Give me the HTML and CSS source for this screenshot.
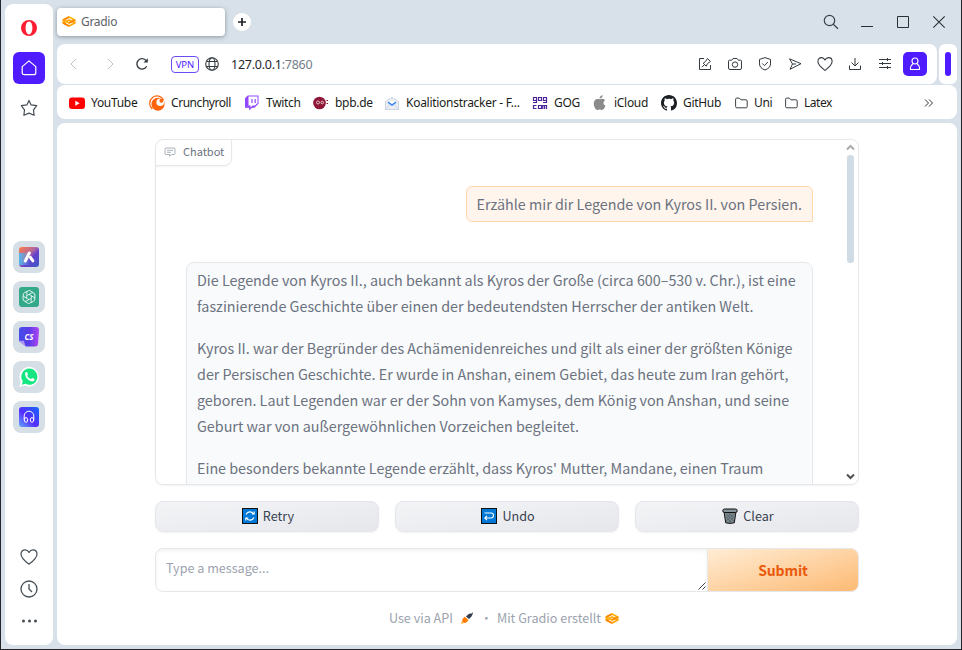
FILE: index.html
```html
<!DOCTYPE html>
<html lang="de">
<head>
<meta charset="utf-8">
<title>Gradio</title>
<link rel="stylesheet" href="styles.css">
</head>
<body>
<svg width="0" height="0" class="defs">
  <symbol id="gradio" viewBox="0 0 14 13">
    <path d="M1.200 5 7 2l5.800 3L7 8Z" fill="none" stroke="#ffb300" stroke-width="1.700" stroke-linejoin="round"/>
    <path d="M1.200 8 7 5l5.800 3L7 11Z" fill="none" stroke="#ffa400" stroke-width="1.700" stroke-linejoin="round"/>
    <path d="M1.200 5 7 2M12.800 5 7 8M1.200 8 7 11" fill="none" stroke="#ff8400" stroke-width="1.700" stroke-linejoin="round"/>
    <path d="M1 5v3M13 5v3" stroke="#ff9d00" stroke-width="1"/>
  </symbol>
  <symbol id="heart" viewBox="0 0 18 18">
    <path d="M9 16.200C6.500 14.300 1 10.200 1 6.200 1 3.500 2.800 1.800 5 1.800c1.800 0 3.200 1 4 2.600.8-1.600 2.200-2.600 4-2.600 2.200 0 4 1.700 4 4.400 0 4-5.500 8.100-8 10Z" fill="none" stroke="currentColor" stroke-width="1.200" stroke-linejoin="round"/>
  </symbol>
  <symbol id="folder" viewBox="0 0 13 12">
    <path d="M.6 2.200q0-1.100 1.100-1.100h2.600l1.600 1.700h5q1.300 0 1.300 1.200v5.500q0 1.300-1.300 1.300h-9Q.6 10.800.6 9.500Z" fill="none" stroke="#3a4046" stroke-width="1"/>
  </symbol>
</svg>
<div class="window">
  <aside class="sidebar">
    <svg class="opera" width="16" height="18" viewBox="0 0 16 18"><path fill="#fa1e32" fill-rule="evenodd" d="M8 1a8 8 0 1 0 0 16A8 8 0 0 0 8 1Zm0 1.600c2 0 3.400 2.800 3.400 6.400S10 15.400 8 15.400 4.600 12.600 4.600 9 6 2.600 8 2.600Z"/></svg>
    <div class="home"><svg width="16" height="16" viewBox="0 0 16 16"><path d="M1.200 6.600 8 .9l6.800 5.700v6.100q0 2-2 2H3.200q-2 0-2-2Z" fill="none" stroke="#fff" stroke-width="1.200" stroke-linejoin="round"/></svg></div>
    <svg class="star" width="18" height="18" viewBox="0 0 18 18"><path d="M9 1.400 11.100 5.900 16.700 6.700 13.500 10.800 14.100 16.300 9 14.100 3.900 16.300 4.500 10.800 1.300 6.700 6.900 5.900Z" fill="none" stroke="#454d55" stroke-width="1.200" stroke-linejoin="round"/></svg>
    <div class="apps">
      <div class="app"><svg width="20" height="20"><defs><linearGradient id="a1" x2="1" y2="1"><stop stop-color="#ff7a45"/><stop offset=".42" stop-color="#b5689a"/><stop offset=".6" stop-color="#6340cc"/><stop offset="1" stop-color="#3d5bc4"/></linearGradient><linearGradient id="a1b" x1="0" x2="1"><stop stop-color="#50b5f0"/><stop offset=".6" stop-color="#50b5f0" stop-opacity="0"/></linearGradient></defs><rect width="20" height="20" rx="3" fill="url(#a1)"/><rect y="6" width="20" height="12" fill="url(#a1b)"/><path d="m6.300 14 4-8" stroke="#fff" stroke-width="3" stroke-linecap="round"/><path d="m11.400 10.300 2.500 3.500" stroke="#fff" stroke-width="3" stroke-linecap="round"/></svg></div>
      <div class="app"><svg width="20" height="20"><rect width="20" height="20" rx="3" fill="#34a98a"/><g fill="none" stroke="#fff" stroke-width=".8" transform="translate(10 10)"><path d="M-2.200-1.300V-4.200a2.300 2.300 0 0 1 3.500-1.900L4-4.500"/><path d="M-2.200-1.300V-4.200a2.300 2.300 0 0 1 3.500-1.900L4-4.500" transform="rotate(60)"/><path d="M-2.200-1.300V-4.200a2.300 2.300 0 0 1 3.500-1.900L4-4.500" transform="rotate(120)"/><path d="M-2.200-1.300V-4.200a2.300 2.300 0 0 1 3.500-1.900L4-4.500" transform="rotate(180)"/><path d="M-2.200-1.300V-4.200a2.300 2.300 0 0 1 3.500-1.900L4-4.500" transform="rotate(240)"/><path d="M-2.200-1.300V-4.200a2.300 2.300 0 0 1 3.500-1.900L4-4.500" transform="rotate(300)"/><path d="M0-2.600 2.300-1.300V1.300L0 2.600-2.300 1.300V-1.300Z"/></g></svg></div>
      <div class="app"><svg width="20" height="20"><defs><linearGradient id="a3" x2="1"><stop stop-color="#444de8"/><stop offset=".5" stop-color="#5b3de8"/><stop offset="1" stop-color="#ad45f2"/></linearGradient></defs><path d="M3 0h14q3 0 3 3l-1 14q-.3 2.500-3 2.500H7L0 14V3Q0 0 3 0Z" fill="url(#a3)"/><path d="m0 13.500 5 .5 1.500 5.500Z" fill="#b596f5"/><text x="10" y="13" class="cs">CS</text></svg></div>
      <div class="app"><svg width="20" height="20"><path d="M10.300 0A9.700 9.700 0 1 1 6 18.500L.2 20l1.500-5.500A9.700 9.700 0 0 1 10.300 0Z" fill="#fff"/><path d="M10.300 1.600a8.100 8.100 0 1 1-3.900 15.200l-3.600 1 1-3.500A8.100 8.100 0 0 1 10.300 1.600Z" fill="#16e681"/><path d="M6.300 5.600c.6-.9 1.600-.8 1.900 0l.7 1.600c.2.600-.8 1.300-.6 1.800.8 1.500 2 2.500 3.500 3 .5.100 1.100-1.200 1.700-1l1.700.8c.8.500.4 1.700-.4 2.200-3.500 2-9.900-3.700-8.500-8.400Z" fill="#fff"/></svg></div>
      <div class="app"><svg width="20" height="20"><defs><linearGradient id="a5" x1="0" x2="1" y1="1" y2="0"><stop stop-color="#62a9ff"/><stop offset=".45" stop-color="#552cff"/><stop offset="1" stop-color="#1567ff"/></linearGradient></defs><rect width="20" height="20" rx="3" fill="url(#a5)"/><path d="M5.200 13V9a4.800 4.800 0 0 1 9.600 0v4" fill="none" stroke="#fff"/><ellipse cx="7" cy="12.900" rx="1.700" ry="2.400" fill="none" stroke="#fff"/><ellipse cx="13" cy="12.900" rx="1.700" ry="2.400" fill="none" stroke="#fff"/></svg></div>
    </div>
    <div class="tools">
      <svg width="18" height="18"><use href="#heart"/></svg>
      <svg width="18" height="18" viewBox="0 0 18 18" fill="none" stroke="currentColor" stroke-width="1.300"><circle cx="9" cy="9" r="8"/><path d="M9 4v5l3 3"/></svg>
      <svg width="18" height="18" viewBox="0 0 18 18" fill="currentColor"><circle cx="3.500" cy="9" r="1.500"/><circle cx="9.500" cy="9" r="1.500"/><circle cx="15.500" cy="9" r="1.500"/></svg>
    </div>
  </aside>
  <div class="main">
    <header class="titlebar">
      <div class="tab"><svg width="14" height="13"><use href="#gradio"/></svg><span>Gradio</span></div>
      <div class="newtab"><svg width="8" height="8"><path d="M4 0v8M0 4h8" stroke="#1f2429" stroke-width="1.700"/></svg></div>
      <div class="controls">
        <svg width="16" height="16" fill="none" stroke="#3b4147" stroke-width="1.200"><circle cx="6.500" cy="6.500" r="5.200"/><path d="m10.300 10.300 4.700 4.500"/></svg>
        <svg width="16" height="16"><path d="M2 12.500h12" stroke="#2b3035"/></svg>
        <svg width="16" height="16"><path d="M2.500 2.500h11v11h-11z" stroke="#2b3035" fill="none"/></svg>
        <svg width="16" height="16"><path d="m2.300 2.300 11.400 11.400m0-11.400L2.300 13.700" stroke="#2b3035" stroke-width="1.100"/></svg>
      </div>
    </header>
    <div class="toolrow">
      <div class="toolbar">
        <div class="nav">
          <svg width="16" height="16"><path d="m10 3-5 5 5 5" fill="none" stroke="#bcc1c6"/></svg>
          <svg class="fwd" width="16" height="16"><path d="m6 3 5 5-5 5" fill="none" stroke="#bcc1c6"/></svg>
          <svg width="16" height="16"><path d="M12.700 10.300a5.200 5.200 0 1 1-.5-5.600" fill="none" stroke="#333a40" stroke-width="1.300"/><path d="M13.800 2.300v4.300H9.500z" fill="#333a40"/></svg>
        </div>
        <span class="vpn">VPN</span>
        <svg class="globe" width="14" height="14" fill="none" stroke="#333a40" stroke-width="1.100"><circle cx="7" cy="7" r="6.300"/><ellipse cx="7" cy="7" rx="3" ry="6.300"/><path d="M1.500 4.500h11M1.500 9.500h11"/></svg>
        <span class="url">127.0.0.1<i>:7860</i></span>
        <div class="actions">
          <svg width="16" height="16" viewBox="0 0 16 16"><path d="M7 2.500H2.500v11h11V9"/><path d="M5 11.300 7 9M6.200 7.200l3 3 1.200-2.500 3-2.300-2.900-2.900-2.200 3.200Z"/></svg>
          <svg width="16" height="16" viewBox="0 0 16 16"><path d="M1.500 5.200q0-1 1-1h2.200L6 2.500h4l1.300 1.700h2.200q1 0 1 1v6.800q0 1.500-1.500 1.500H3Q1.500 13.500 1.500 12Z"/><circle cx="8" cy="8.600" r="2.700"/></svg>
          <svg width="16" height="16" viewBox="0 0 16 16"><path d="M8 1.600 13.500 3.400v4.500c0 3-2.200 4.900-5.500 6.100-3.300-1.200-5.500-3.100-5.500-6.100V3.400ZM5.200 7.400l2.200 2.200 3.500-3.600"/></svg>
          <svg width="16" height="16" viewBox="0 0 16 16"><path d="M2.500 2.800 14 7.700 3 13.300l2.500-5.300ZM5.500 8h3.500"/></svg>
          <svg width="16" height="16"><use href="#heart"/></svg>
          <svg width="16" height="16" viewBox="0 0 16 16"><path d="M8 2v7.500M4.500 6.500 8 10l3.500-3.500M2.500 9.500v4h11v-4"/></svg>
          <svg width="16" height="16" viewBox="0 0 16 16"><path d="M2 3.500h12M2 7.500h12M2 11.500h12M10.500 2v3M5.500 6v3M10.500 10v3"/></svg>
        </div>
        <div class="avatar"><svg width="14" height="14" fill="none" stroke="#fff" stroke-width="1.100"><circle cx="7" cy="4" r="3"/><path d="M4.800 6.800C3 8.300 2.200 10 2.500 12.500h9C11.800 10 11 8.300 9.200 6.800"/></svg></div>
      </div>
      <div class="panel"><span></span></div>
    </div>
    <nav class="bookmarks">
      <a><svg width="16" height="16"><rect y="2.500" width="16" height="11.500" rx="3" fill="#f00"/><path d="M6.300 5.800v5l4.400-2.500z" fill="#fff"/></svg><span>YouTube</span></a>
      <a><svg width="16" height="16"><path d="M14.700 5A7.400 7.400 0 1 0 3.300 14" fill="none" stroke="#ff640a" stroke-width="1.200"/><circle cx="9" cy="9.200" r="6.500" fill="#ff640a"/><circle cx="11.200" cy="7.300" r="3.800" fill="#fff"/><circle cx="12.400" cy="5.700" r="2" fill="#ff640a"/></svg><span class="tight">Crunchyroll</span></a>
      <a><svg width="16" height="16"><path d="M3.800.5h10.700v8.300l-4 4H8L5.200 15.500v-2.700H1V3.200z" fill="#9146ff"/><path d="M4.500 1.500h9V8l-2.500 2.500H8.500L6.500 12.500v-2h-2z" fill="#fff"/><path d="M8 4v4M11.200 4v4" stroke="#9146ff" stroke-width="1.200"/></svg><span>Twitch</span></a>
      <a><svg width="16" height="16"><circle cx="6.500" cy="8" r="6.300" fill="#901637"/><circle cx="5" cy="7.500" r="1.500" stroke="#fff" stroke-width=".7" fill="none"/><circle cx="9.300" cy="7.500" r="1.300" stroke="#fff" stroke-width=".7" fill="none"/><path d="M13.500 5.500H15M13.500 8.500H15" stroke="#901637" stroke-width="1.200"/></svg><span>bpb.de</span></a>
      <a><svg width="16" height="16"><path d="M1.500 6.500 8 2.500l6.500 4v8h-13z" fill="#e9eff4" stroke="#cbd5df"/><path d="M3.500 6.500h9L8 11z" fill="#fff"/><path d="m4 7.200 4 2.800 4-2.800" fill="none" stroke="#3c82f6" stroke-width="1.500"/><path d="m1.500 14 4.500-4m8.500 4L10 10" stroke="#cbd5df"/></svg><span class="snug">Koalitionstracker - F...</span></a>
      <a><svg width="16" height="16" fill="none" stroke="#4a249b" stroke-width="1.200"><path d="M4.500 5.500h-3v-3h3v5h-3.500M6.500 2.500h3v3h-3zM14.500 5.500h-3v-3h3v5h-3.500M4.500 10.500h-3v3h3M6.500 10.500h3v3h-3zM10.800 14v-3.500h3.700V14M12.600 10.500V14"/></svg><span>GOG</span></a>
      <a><svg width="16" height="16" fill="#8b8b8b"><path d="M8 4.300c1.300-.7 3.800-1 5 1-2.300 1.600-1.800 4.500.5 5.500C12.800 13 11.300 15 10 15c-1 0-1.300-.6-2.300-.6S6.200 15 5.300 15C3.300 15 .3 8.900 2.600 5.700 4.200 3.500 6.300 4 8 4.300Z"/><path d="M7.500 3.500C7.500 1.800 9 .4 10.700.3c.1 1.900-1.400 3.200-3.200 3.200Z"/></svg><span>iCloud</span></a>
      <a><svg width="16" height="16" viewBox="0 0 16 16"><path fill="#1b1f23" d="M8 0C3.580 0 0 3.580 0 8c0 3.540 2.290 6.530 5.470 7.590.4.070.55-.17.55-.38 0-.19-.01-.82-.01-1.490-2.010.37-2.530-.49-2.690-.94-.09-.23-.48-.94-.82-1.130-.28-.15-.68-.52-.01-.53.63-.01 1.080.58 1.230.82.72 1.210 1.870.87 2.330.66.07-.52.28-.87.51-1.070-1.780-.2-3.640-.89-3.640-3.950 0-.87.31-1.590.82-2.150-.08-.2-.36-1.020.08-2.120 0 0 .67-.21 2.200.82.64-.18 1.320-.27 2-.27s1.360.09 2 .27c1.530-1.040 2.200-.82 2.200-.82.44 1.100.16 1.920.08 2.120.51.56.82 1.270.82 2.150 0 3.070-1.870 3.750-3.650 3.950.29.25.54.73.54 1.480 0 1.070-.01 1.930-.01 2.200 0 .21.15.46.55.38A8.010 8.010 0 0 0 16 8c0-4.420-3.580-8-8-8Z"/></svg><span>GitHub</span></a>
      <a><svg width="13" height="12"><use href="#folder"/></svg><span>Uni</span></a>
      <a><svg width="13" height="12"><use href="#folder"/></svg><span class="tight">Latex</span></a>
      <svg class="more" width="10" height="8" fill="none" stroke="#2f353a"><path d="m1 .5 3.500 3.500L1 7.500M5 .5 8.500 4 5 7.500"/></svg>
    </nav>
    <main class="page">
      <section class="chat">
        <div class="label"><svg width="12" height="10" fill="none" stroke="#a3a9b3" stroke-width=".9"><path d="M2 1h8q1 0 1 1v4.500q0 1-1 1H7.500L5.500 9.300V7.500H2q-1 0-1-1V2q0-1 1-1ZM3 3.300h6M3 5.300h4"/></svg><span>Chatbot</span></div>
        <div class="log">
          <div class="msg user">Erzähle mir dir Legende von Kyros II. von Persien.</div>
          <div class="msg bot">
            <p>Die Legende von Kyros II., auch bekannt als Kyros der Große (circa 600–530 v. Chr.), ist eine<br>faszinierende Geschichte über einen der bedeutendsten Herrscher der antiken Welt.</p>
            <p>Kyros II. war der Begründer des Achämenidenreiches und gilt als einer der größten Könige<br>der Persischen Geschichte. Er wurde in Anshan, einem Gebiet, das heute zum Iran gehört,<br>geboren. Laut Legenden war er der Sohn von Kamyses, dem König von Anshan, und seine<br>Geburt war von außergewöhnlichen Vorzeichen begleitet.</p>
            <p>Eine besonders bekannte Legende erzählt, dass Kyros' Mutter, Mandane, einen Traum</p>
          </div>
        </div>
        <div class="scroll">
          <svg width="9" height="7"><path d="M1 5.500 4.500 2 8 5.500" fill="none" stroke="#aaa" stroke-width="2"/></svg>
          <span class="thumb"></span>
          <svg class="down" width="9" height="7"><path d="M1 1.500 4.500 5 8 1.500" fill="none" stroke="#505050" stroke-width="2"/></svg>
        </div>
      </section>
      <div class="buttons">
        <button><svg width="16" height="16"><rect x=".5" y=".5" width="15" height="15" fill="#0078d7" stroke="#111"/><path d="M4 6.500a4.300 4.300 0 0 1 7.500-.8M12 9.500a4.300 4.300 0 0 1-7.500.8M12.200 3.500V6H9.700M3.800 12.500V10h2.500" fill="none" stroke="#fff" stroke-width="1.100"/></svg>Retry</button>
        <button><svg width="16" height="16"><rect x=".5" y=".5" width="15" height="15" fill="#0078d7" stroke="#111"/><path d="M3.500 5h6.500q2.500 0 2.500 2.500T10 10H4M6 7.800 3.800 10 6 12.200" fill="none" stroke="#fff" stroke-width="1.100"/></svg>Undo</button>
        <button><svg width="16" height="16"><path d="M2 3.500h12l-1.700 11.300q-4.300 1.200-8.600 0Z" fill="#7b888e" stroke="#111"/><path d="m4 6 8 7M4.500 9.500 9 14M7 5.500l5 4.500M12 6l-8 7M9 5.500 4.500 10M11.500 9.500 7 14" stroke="#4a565c" stroke-width=".6"/><rect x=".8" y="1" width="14.400" height="3.500" rx="1.700" fill="#87949a" stroke="#111"/></svg>Clear</button>
      </div>
      <div class="compose">
        <div class="input">Type a message...<svg class="grip" width="8" height="8"><path d="M.5 7.500l7-7M4.500 7.500l3-3" stroke="#333" stroke-width=".9"/></svg></div>
        <button class="submit">Submit</button>
      </div>
      <footer><span>Use via API</span><svg class="rocket" width="12" height="12"><path d="M5 4.500 8 1.800 10.500 1.500 12 0 11.500 2.500 10.500 4.500 8 7Z" fill="#333c4d"/><path d="m1.500 7 2.500-2.500 3.500 3.500-2 2.500L3 11l-2-1.500Z" fill="#ff7c00"/><path d="m0 12 1-3 2 2Z" fill="#ffab35"/><path d="m4 4.500 4.500 4" stroke="#fff" stroke-width=".7"/></svg><span class="dot">·</span><span>Mit Gradio erstellt</span><svg width="14" height="13"><use href="#gradio"/></svg></footer>
    </main>
  </div>
</div>
</body>
</html>
```
FILE: styles.css
```css
* { box-sizing: border-box; }
body { margin: 0; font-family: "Noto Sans", "Open Sans", sans-serif; }
svg { display: block; flex: none; }
.defs { position: absolute; }
button { font: inherit; }

.window {
  display: flex; gap: 4px; width: 962px; height: 650px; overflow: hidden;
  padding: 4px 4px 4px; background: #d8e1e9;
  border: solid #22252b; border-width: 0 1px 1px;
}
.sidebar {
  width: 48px; height: 641px; background: #fff; border-radius: 8px;
  display: flex; flex-direction: column; align-items: center; color: #454d55;
  padding-top: 15px;
}
.home {
  width: 32px; height: 32px; margin-top: 15px; border-radius: 6px; background: #4e1cff;
  display: grid; place-items: center;
}
.star { margin-top: 15px; }
.apps { display: flex; flex-direction: column; gap: 8px; margin-top: 124px; }
.app {
  width: 32px; height: 32px; border-radius: 8px; background: #d5dfe5;
  display: grid; place-items: center;
}
.cs { font: italic 700 8px "Open Sans", sans-serif; fill: #fff; text-anchor: middle; }
.tools { display: flex; flex-direction: column; gap: 14px; margin: auto 0 15px; }

.main { flex: 1; display: flex; flex-direction: column; min-width: 0; }
.titlebar { height: 40px; display: flex; align-items: flex-start; padding-top: 4px; }
.tab {
  width: 168px; height: 28px; background: #fff; border-radius: 4px;
  box-shadow: 0 1px 4px rgba(60, 75, 90, .5);
  display: flex; align-items: center; gap: 5px; padding: 0 0 1px 5px;
  font-size: 12px; letter-spacing: -.3px; color: #5d6166;
}
.newtab {
  width: 18px; height: 18px; margin: 5px 0 0 8px; border-radius: 50%; background: #fff;
  display: grid; place-items: center;
}
.controls { display: flex; gap: 20px; margin: 6px 10px 0 auto; }
.toolrow { display: flex; gap: 2px; height: 40px; }
.toolbar {
  flex: 1; background: #fff; border-radius: 8px; display: flex; align-items: center;
  padding: 0 10px 0 9px;
}
.nav { display: flex; gap: 18px; }
.fwd { margin: 0 -2px 0 2px; }
.vpn {
  width: 28px; height: 17px; margin-left: 21px; border: 1px solid #6b4cf5; border-radius: 4px;
  font-size: 9.500px; line-height: 15px; text-align: center; color: #4e1cff;
}
.globe { margin-left: 6px; }
.url { margin-left: 12px; font-size: 12.500px; letter-spacing: -.25px; color: #24292e; white-space: nowrap; }
.url i { font-style: normal; color: #74808c; }
.actions { display: flex; gap: 14px; margin-left: auto; color: #333a40; }
.actions svg { fill: none; stroke: #333a40; stroke-width: 1; }
.avatar {
  width: 24px; height: 24px; margin-left: 10px; border-radius: 5px; background: #4e1cff;
  display: grid; place-items: center;
}
.panel { width: 18px; border-radius: 6px; background: #fff; display: grid; place-items: center; }
.panel span { width: 6px; height: 24px; border-radius: 3px; background: #4e1cff; }
.bookmarks {
  height: 34px; margin-top: 1px; background: #fff; border-radius: 8px; padding: 1px 23px 0 12px;
  display: grid; align-items: center;
  grid-template-columns: 80px 95px 69px 71px 148px 60px 69px 74px 50px 1fr 10px;
  font-size: 12px; letter-spacing: -.3px; color: #1a1d20;
}
.bookmarks a { display: flex; align-items: center; gap: 6px; white-space: nowrap; }
.bookmarks .tight { letter-spacing: -.45px; }
.bookmarks .snug { letter-spacing: -.28px; }

.page {
  flex: 1; margin-top: 4px; background: #fff; border-radius: 8px;
  padding: 16px 98px 0; font-family: "Noto Sans CJK SC", sans-serif;
}
.chat {
  position: relative; height: 346px; border: 1px solid #e5e7eb; border-radius: 8px;
  overflow: hidden; box-shadow: 0 1px 2px rgba(0, 0, 0, .05);
}
.label {
  position: absolute; left: -1px; top: -1px; width: 77px; height: 27px;
  display: flex; align-items: center; gap: 7px; padding: 0 0 1px 8px;
  border: 1px solid #e5e7eb; border-radius: 8px 0 8px 0; box-shadow: 0 1px 2px rgba(0, 0, 0, .05);
  font-size: 11px; line-height: 18px; color: #6b7280;
}
.label span { padding-bottom: 2px; }
.log {
  display: flex; flex-direction: column; padding: 46px 45px 0 30px;
  font-size: 14.330px; line-height: 26px; color: #6b7280;
}
.msg { border: 1px solid; white-space: nowrap; padding: 4px 10px 4px; }
.user {
  align-self: flex-end; height: 36px; border-color: #fed7aa; border-radius: 6px 6px 0 6px;
  background: #fff5ec;
}
.bot { margin-top: 40px; border-color: #e5e7eb; border-radius: 8px; background: #f9fafb; }
.msg p { margin: 0 0 16px; }
.scroll {
  position: absolute; right: 2px; top: 0; bottom: 0; width: 11px;
  display: flex; flex-direction: column; align-items: center; padding: 4px 0 4px;
}
.thumb { width: 7px; height: 108px; margin-top: 4px; border-radius: 3px; background: #d1dbe4; }
.down { margin-top: auto; }
.buttons { display: grid; grid-template-columns: repeat(3, 1fr); gap: 16px; margin-top: 16px; }
.buttons button {
  height: 31px; display: flex; align-items: center; justify-content: center; gap: 5px; padding: 0 0 2px 2px;
  border: 1px solid #e5e7eb; border-radius: 8px; color: #374151;
  background: linear-gradient(to bottom right, #f3f4f6, #e5e7eb);
  box-shadow: 0 1px 2px rgba(0, 0, 0, .05); font-size: 12.600px; line-height: 20px;
}
.compose {
  display: flex; height: 44px; margin-top: 16px; border: 1px solid #e5e7eb; border-radius: 8px;
  overflow: hidden;
}
.input {
  position: relative; flex: 1; padding: 9px 10px; font-size: 12.600px; line-height: 20px; color: #9ca3af;
  box-shadow: inset 0 2px 4px rgba(0, 0, 0, .05);
}
.grip { position: absolute; right: 1px; bottom: 1px; }
.submit {
  width: 151px; padding: 0; border: 0; border-left: 1px solid #e5e7eb; color: #ea580c;
  background: linear-gradient(to bottom right, #ffedd5, #fdba74);
  font-size: 14px; font-weight: 700; line-height: 24px; letter-spacing: -.1px;
}
footer {
  display: flex; align-items: center; justify-content: center; height: 20px; margin-top: 16px;
  padding-right: 6px;
  font-size: 12.600px; line-height: 20px; color: #9ca3af; white-space: nowrap;
}
footer svg { margin-left: 4px; }
footer .rocket { margin-left: 8px; }
.dot { width: 24px; padding-left: 3px; text-align: center; }
```
